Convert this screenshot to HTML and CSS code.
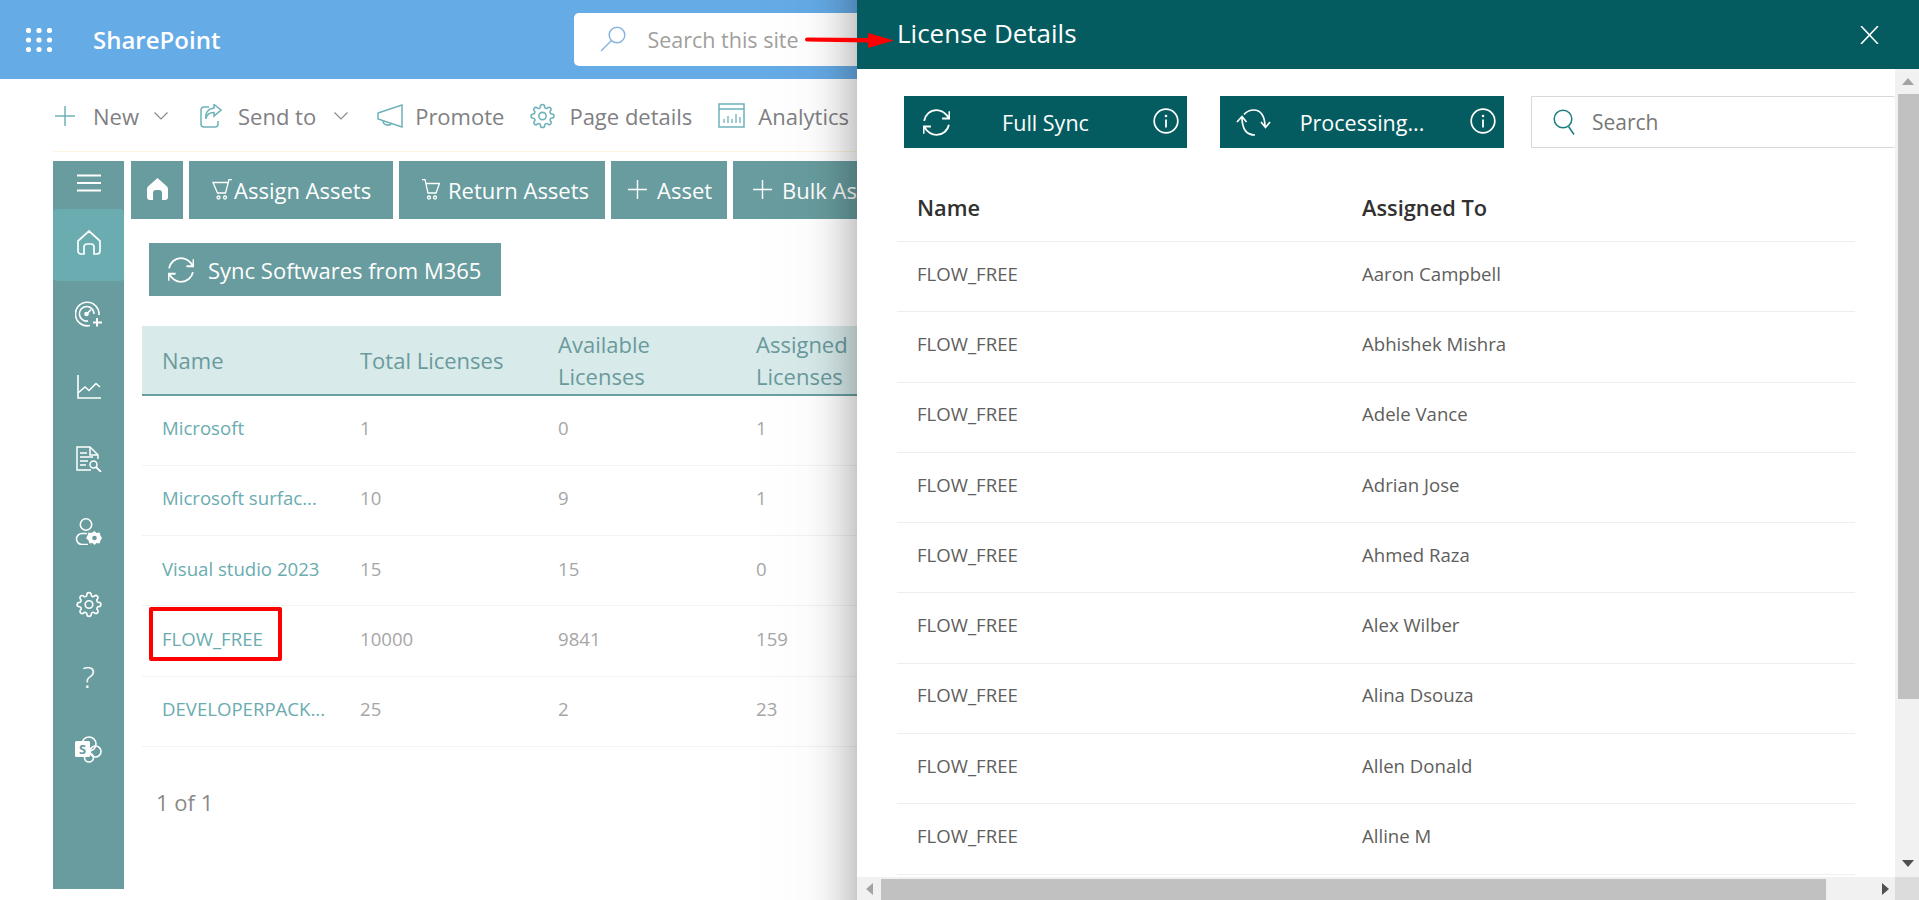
FILE: index.html
```html
<!DOCTYPE html>
<html lang="en">
<head>
    <meta charset="UTF-8">
    <meta name="viewport" content="width=device-width, initial-scale=1.0">
    <title>License Details</title>
    <link rel="stylesheet" href="styles.css">
</head>
<body>
<svg class="sprite" width="0" height="0">
    <symbol id="i-sync" viewBox="0 0 24 24">
        <path d="M1 10.500C2 5 6.500 1 12 1c4.500 0 8 2.500 11 7M23.500 2v6.500H17M23 14c-1 5-5.500 9-11 9-4.500 0-8-2.500-11-7M.5 22v-6.500H7" fill="none" stroke="#fff" stroke-width="1.700"/>
    </symbol>
    <symbol id="i-info" viewBox="0 0 26 26">
        <circle cx="13" cy="13" r="11.800" fill="none" stroke="#fff" stroke-width="1.700"/>
        <path d="M13 11.500v8" stroke="#fff" stroke-width="1.800"/>
        <circle cx="13" cy="8" r="1.300" fill="#fff"/>
    </symbol>
    <symbol id="i-plus" viewBox="0 0 20 20">
        <path d="M10 0v20M0 10h20" stroke="currentColor" stroke-width="1.500"/>
    </symbol>
    <symbol id="i-chev" viewBox="0 0 14 8">
        <path d="M.5 .5L7 7 13.500 .5" fill="none" stroke="#8a8a8a" stroke-width="1.200"/>
    </symbol>
    <symbol id="i-gear" viewBox="0 0 24 24">
        <g fill="none" stroke="currentColor" stroke-width="1.500">
            <circle cx="12" cy="12" r="3.500"/>
            <path d="M19.400 15a1.650 1.650 0 0 0 .33 1.820l.06.06a2 2 0 0 1 0 2.830 2 2 0 0 1-2.830 0l-.06-.06a1.650 1.650 0 0 0-1.820-.33 1.650 1.650 0 0 0-1 1.510V21a2 2 0 0 1-2 2 2 2 0 0 1-2-2v-.09A1.650 1.650 0 0 0 9 19.400a1.650 1.650 0 0 0-1.820.33l-.06.06a2 2 0 0 1-2.830 0 2 2 0 0 1 0-2.830l.06-.06a1.650 1.650 0 0 0 .33-1.820 1.650 1.650 0 0 0-1.510-1H3a2 2 0 0 1-2-2 2 2 0 0 1 2-2h.09A1.650 1.650 0 0 0 4.600 9a1.650 1.650 0 0 0-.33-1.820l-.06-.06a2 2 0 0 1 0-2.830 2 2 0 0 1 2.830 0l.06.06a1.650 1.650 0 0 0 1.820.33H9a1.650 1.650 0 0 0 1-1.510V3a2 2 0 0 1 2-2 2 2 0 0 1 2 2v.09a1.650 1.650 0 0 0 1 1.510 1.650 1.650 0 0 0 1.820-.33l.06-.06a2 2 0 0 1 2.830 0 2 2 0 0 1 0 2.830l-.06.06a1.650 1.650 0 0 0-.33 1.820V9a1.650 1.650 0 0 0 1.510 1H21a2 2 0 0 1 2 2 2 2 0 0 1-2 2h-.09a1.650 1.650 0 0 0-1.510 1z"/>
        </g>
    </symbol>
</svg>

<header class="topbar">
    <svg class="waffle" width="26" height="24" viewBox="0 0 26 24" fill="#fff">
        <circle cx="2.500" cy="2.500" r="2.600"/><circle cx="13" cy="2.500" r="2.600"/><circle cx="23.500" cy="2.500" r="2.600"/>
        <circle cx="2.500" cy="12" r="2.600"/><circle cx="13" cy="12" r="2.600"/><circle cx="23.500" cy="12" r="2.600"/>
        <circle cx="2.500" cy="21.500" r="2.600"/><circle cx="13" cy="21.500" r="2.600"/><circle cx="23.500" cy="21.500" r="2.600"/>
    </svg>
    <span class="brand">SharePoint</span>
    <div class="site-search">
        <svg width="26" height="26" viewBox="0 0 26 26" fill="none" stroke="#87b3e0" stroke-width="1.500">
            <circle cx="17" cy="9" r="7.800"/>
            <path d="M11.500 14.500L1 25"/>
        </svg>
        <span>Search this site</span>
    </div>
</header>

<nav class="cmdbar">
    <div class="cmd cmd-new"><svg class="cmd-ic" width="20" height="22"><use href="#i-plus"/></svg><span>New</span><svg class="chev" width="14" height="8"><use href="#i-chev"/></svg></div>
    <div class="cmd cmd-send"><svg class="cmd-ic" width="22" height="24" viewBox="0 0 22 24" fill="none" stroke="currentColor" stroke-width="1.500"><path d="M9 3H4a3 3 0 0 0-3 3v14a3 3 0 0 0 3 3h11a3 3 0 0 0 3-3v-3"/><path d="M6 15c.5-4 3-6.500 8-6.500V12l7-6-7-5.500V4C8 4.500 5 9 6 15z"/></svg><span>Send to</span><svg class="chev" width="14" height="8"><use href="#i-chev"/></svg></div>
    <div class="cmd cmd-promote"><svg class="cmd-ic" width="27" height="24" viewBox="0 0 27 24" fill="none" stroke="currentColor" stroke-width="1.500"><path d="M1 9L25 1v22L1 15z"/><path d="M6 16.500c0 5 7 6 9 2.500"/></svg><span>Promote</span></div>
    <div class="cmd cmd-details"><svg class="cmd-ic" width="25" height="26"><use href="#i-gear"/></svg><span>Page details</span></div>
    <div class="cmd cmd-analytics"><svg class="cmd-ic" width="27" height="25" viewBox="0 0 27 25" fill="none" stroke="currentColor" stroke-width="1.500"><path d="M1 1h25v23H1zM1 6h25"/><path d="M6 20v-4M10 20v-7M14 20v-4M18 20v-9M22 20v-6" stroke-width="1.300"/></svg><span>Analytics</span></div>
</nav>

<div class="app">
    <aside class="sidenav">
        <div class="nav-top">
            <svg width="24" height="18" viewBox="0 0 24 18" stroke="#fff" stroke-width="1.800"><path d="M0 1.500h24M0 9h24M0 16.500h24"/></svg>
        </div>
        <div class="nav-item active">
            <svg width="24" height="25" viewBox="0 0 24 25" fill="none" stroke="#fff" stroke-width="1.700"><path d="M1 11L12 1l11 10v10a3 3 0 0 1-3 3h-3v-7a3 3 0 0 0-3-3h-4a3 3 0 0 0-3 3v7H4a3 3 0 0 1-3-3z"/></svg>
        </div>
        <div class="nav-item">
            <svg width="28" height="26" viewBox="0 0 28 26" fill="none" stroke="#fff" stroke-width="1.600"><path d="M15 24.500A11.800 11.800 0 1 1 24 14"/><path d="M13 20a7.300 7.300 0 1 1 6-7"/><path d="M11 14l5-5.500"/><circle cx="11.500" cy="13" r="1.500" fill="#fff"/><path d="M22 17v8.500M18 21.500h9" stroke-width="2"/></svg>
        </div>
        <div class="nav-item">
            <svg width="24" height="24" viewBox="0 0 24 24" fill="none" stroke="#fff" stroke-width="1.600"><path d="M1 0v23h23"/><path d="M1 18l7-6 4 3.500 7-7 4 3.500"/></svg>
        </div>
        <div class="nav-item">
            <svg width="26" height="26" viewBox="0 0 26 26" fill="none" stroke="#fff" stroke-width="1.500"><path d="M15 24H1V1h13l8 8v4"/><path d="M14 1v8h8"/><path d="M4 7h7M4 11h13M4 15h8M4 19h6"/><circle cx="17.500" cy="18.500" r="3.500"/><path d="M20 21l5 5" stroke-width="1.800"/></svg>
        </div>
        <div class="nav-item">
            <svg width="27" height="27" viewBox="0 0 27 27" fill="none" stroke="#fff" stroke-width="1.600"><circle cx="11" cy="6.500" r="5.700"/><path d="M12 15.500H7a5.500 5.500 0 0 0 0 11h6"/><path d="M19.500 13l2 2 3-.5 1 3 1.500 2.500-1.500 2.500-1 3-3-.5-2 2-2-2-3 .5-1-3L11 20l1.500-2.500 1-3 3 .5z" fill="#fff" stroke="none"/><circle cx="19.500" cy="20" r="2.300" fill="#689c9e" stroke="none"/></svg>
        </div>
        <div class="nav-item">
            <svg class="nav-gear" width="26" height="27"><use href="#i-gear"/></svg>
        </div>
        <div class="nav-item nav-help">?</div>
        <div class="nav-item">
            <svg width="27" height="27" viewBox="0 0 27 27"><g fill="none" stroke="#fff" stroke-width="1.600"><circle cx="14" cy="8" r="7"/><circle cx="20.500" cy="15.500" r="5.500"/><circle cx="14" cy="21.500" r="4.500"/></g><rect x="0" y="5" width="15" height="16" rx="1.500" fill="#fff"/><text class="s-mark" x="7.500" y="18">S</text></svg>
        </div>
    </aside>

    <main class="content">
        <div class="toolbar">
            <button class="tool tool-home"><svg width="21" height="22" viewBox="0 0 21 22" fill="#fff"><path d="M10.500 0L20 8.500c.7.700 1 1.500 1 2.500v8a3 3 0 0 1-3 3h-3v-7a3 3 0 0 0-3-3H9a3 3 0 0 0-3 3v7H3a3 3 0 0 1-3-3v-8c0-1 .3-1.800 1-2.500z"/></svg></button>
            <button class="tool tool-assign"><svg width="20" height="21" viewBox="0 0 20 21" fill="none" stroke="#fff" stroke-width="1.300"><path d="M20 .7h-3L13.500 14h-8L1 3.500h15"/><circle cx="6.500" cy="18.500" r="1.500"/><circle cx="13" cy="18.500" r="1.500"/></svg>Assign Assets</button>
            <button class="tool tool-return"><svg width="18" height="21" viewBox="0 0 18 21" fill="none" stroke="#fff" stroke-width="1.300"><path d="M0 .7h3L6 14h8l3.500-9.500H4"/><circle cx="7" cy="18.500" r="1.500"/><circle cx="13" cy="18.500" r="1.500"/></svg>Return Assets</button>
            <button class="tool tool-add"><svg width="19" height="19"><use href="#i-plus"/></svg>Asset</button>
            <button class="tool tool-bulk"><svg width="19" height="19"><use href="#i-plus"/></svg>Bulk Assets</button>
        </div>

        <button class="sync-btn"><svg width="26" height="26"><use href="#i-sync"/></svg>Sync Softwares from M365</button>

        <table class="soft-table">
            <thead>
                <tr><th>Name</th><th>Total Licenses</th><th>Available Licenses</th><th>Assigned Licenses</th></tr>
            </thead>
            <tbody>
                <tr><td><a>Microsoft</a></td><td>1</td><td>0</td><td>1</td></tr>
                <tr><td><a>Microsoft surfac...</a></td><td>10</td><td>9</td><td>1</td></tr>
                <tr><td><a>Visual studio 2023</a></td><td>15</td><td>15</td><td>0</td></tr>
                <tr><td><a class="marked">FLOW_FREE</a></td><td>10000</td><td>9841</td><td>159</td></tr>
                <tr><td><a>DEVELOPERPACK...</a></td><td>25</td><td>2</td><td>23</td></tr>
            </tbody>
        </table>

        <div class="pager">1 of 1</div>
    </main>
</div>

<section class="panel">
    <div class="panel-head">
        <h2>License Details</h2>
        <svg width="19" height="18" viewBox="0 0 19 18" stroke="#fff" stroke-width="1.600"><path d="M1 0l17 18M18 0L1 18"/></svg>
    </div>
    <div class="panel-main">
        <div class="panel-body">
            <div class="panel-actions">
                <button class="p-btn p-btn-first"><svg class="lead" width="27" height="27"><use href="#i-sync"/></svg><span>Full Sync</span><svg class="info" width="26" height="26"><use href="#i-info"/></svg></button>
                <button class="p-btn p-btn-second"><svg class="lead" width="35" height="27" viewBox="0 0 35 27" fill="none" stroke="#fff" stroke-width="1.700"><path d="M8 5.500C11 2 14.500 1 18 1c6 0 11 5 11 17M25 13l4.500 5.500L34 13M19 26C11 26 6 21 6 8M1 13l5-5.500 4.500 5.500"/></svg><span>Processing...</span><svg class="info" width="26" height="26"><use href="#i-info"/></svg></button>
                <div class="p-search">
                    <svg width="23" height="26" viewBox="0 0 23 26" fill="none" stroke="#1b7c80" stroke-width="1.500"><circle cx="10" cy="10" r="8.800"/><path d="M15.500 17.500L21 25.500"/></svg>
                    <span>Search</span>
                </div>
            </div>
            <div class="lic-head"><span>Name</span><span>Assigned To</span></div>
            <div class="lic-row"><span>FLOW_FREE</span><span>Aaron Campbell</span></div>
            <div class="lic-row"><span>FLOW_FREE</span><span>Abhishek Mishra</span></div>
            <div class="lic-row"><span>FLOW_FREE</span><span>Adele Vance</span></div>
            <div class="lic-row"><span>FLOW_FREE</span><span>Adrian Jose</span></div>
            <div class="lic-row"><span>FLOW_FREE</span><span>Ahmed Raza</span></div>
            <div class="lic-row"><span>FLOW_FREE</span><span>Alex Wilber</span></div>
            <div class="lic-row"><span>FLOW_FREE</span><span>Alina Dsouza</span></div>
            <div class="lic-row"><span>FLOW_FREE</span><span>Allen Donald</span></div>
            <div class="lic-row"><span>FLOW_FREE</span><span>Alline M</span></div>
        </div>
        <div class="vscroll">
            <i class="arrow-up"></i>
            <div class="vthumb"></div>
            <i class="arrow-down"></i>
        </div>
    </div>
    <div class="hscroll">
        <i class="arrow-left"></i>
        <div class="hthumb"></div>
        <i class="arrow-right"></i>
        <div class="corner"></div>
    </div>
</section>

<!-- red callouts from the screenshot -->
<svg class="callout" width="92" height="16" viewBox="0 0 92 16"><path d="M3 4.500L64 5V0L90 7.500 64 15V9.500L3 8.500a2 2 0 0 1 0-4z" fill="#f00"/></svg>
</body>
</html>
```

FILE: styles.css
```css
*, *::before, *::after {
    box-sizing: border-box;
}

html, body {
    height: 100%;
}

body {
    margin: 0;
    overflow: hidden;
    background: #fff;
    font-family: "Open Sans", "Noto Sans", sans-serif;
    color: #605e5c;
}

.sprite {
    position: absolute;
}

button {
    border: none;
    font-family: inherit;
    color: #fff;
}

/* top bar */
.topbar {
    display: flex;
    align-items: center;
    height: 79px;
    background: #65abe6;
    padding-left: 26px;
}

.brand {
    margin-left: 41px;
    font-size: 24px;
    font-weight: 600;
    color: #fff;
}

.site-search {
    display: flex;
    align-items: center;
    width: 400px;
    height: 53px;
    margin-left: 354px;
    margin-top: -1px;
    padding-left: 26px;
    background: #fff;
    border-radius: 5px;
    font-size: 21.500px;
    color: #a19f9d;
}

.site-search span {
    margin-left: 21px;
}

/* command bar */
.cmdbar {
    display: flex;
    align-items: center;
    height: 73px;
    margin-left: 53px;
    padding: 1px 0 0 2px;
    gap: 28px;
    border-bottom: 1px solid #fdf5e0;
    font-size: 22px;
    color: #808084;
}

.cmd {
    display: flex;
    align-items: center;
    gap: 15px;
}

.cmd-ic {
    color: #6db2b8;
}

.cmd-new {
    margin-right: 4px;
}

.cmd-new .cmd-ic {
    margin-right: 3px;
}

.cmd-send {
    gap: 16px;
    margin-right: 1px;
}

.cmd-send .chev {
    margin-left: 2px;
}

.cmd-promote {
    gap: 11px;
    margin-right: -2px;
}

.cmd-details {
    gap: 14px;
    margin-right: -2px;
}

.cmd-analytics {
    gap: 13px;
}

/* main app */
.app {
    display: flex;
    margin: 9px 0 0 53px;
}

.sidenav {
    width: 71px;
    height: 728px;
    flex-shrink: 0;
    background: #689c9e;
}

.nav-top {
    display: flex;
    justify-content: center;
    align-items: center;
    height: 48px;
    padding-bottom: 5px;
}

.nav-item {
    display: flex;
    justify-content: center;
    align-items: center;
    height: 72.500px;
    padding-bottom: 6px;
    color: #fff;
}

.nav-item.active {
    background: #6aacb0;
    border-radius: 4px;
    height: 72px;
}

.nav-help {
    font-size: 30px;
    font-weight: 300;
}

.s-mark {
    font-size: 13px;
    font-weight: 700;
    fill: #689c9e;
    text-anchor: middle;
}

.content {
    flex: 1;
    padding-left: 7px;
}

.toolbar {
    display: flex;
    gap: 6px;
}

.tool {
    display: flex;
    align-items: center;
    height: 58px;
    padding-bottom: 2px;
    background: #689c9e;
    font-size: 22px;
    white-space: nowrap;
    flex-shrink: 0;
}

.tool-home {
    width: 52px;
    justify-content: center;
    padding: 0 0 2px;
}

.tool-assign {
    width: 204px;
    padding-left: 23px;
    gap: 2px;
}

.tool-return {
    width: 206px;
    padding-left: 23px;
    gap: 8px;
}

.tool-add {
    width: 116px;
    padding-left: 17px;
    gap: 10px;
}

.tool-bulk {
    width: 200px;
    padding-left: 20px;
    gap: 10px;
}

.sync-btn {
    display: flex;
    align-items: center;
    gap: 14px;
    width: 352px;
    height: 53px;
    margin: 24px 0 0 18px;
    padding-left: 19px;
    background: #689c9e;
    font-size: 22px;
}

.soft-table {
    width: 792px;
    margin: 30px 0 0 11px;
    border-collapse: collapse;
    table-layout: fixed;
}

.soft-table th {
    height: 69px;
    padding: 0 20px;
    background: #d8eaea;
    border-bottom: 2px solid #6a9e9f;
    text-align: left;
    font-size: 22px;
    font-weight: 400;
    line-height: 32px;
    color: #6a9a9c;
}

.soft-table td {
    height: 70.300px;
    padding: 0 20px 5px;
    border-bottom: 1px solid #f3f3f3;
    font-size: 18.600px;
    color: #a6a6a6;
    white-space: nowrap;
}

.soft-table a {
    color: #6aacb0;
}

.marked {
    position: relative;
}

/* annotation box round the FLOW_FREE link */
.marked::after {
    content: "";
    position: absolute;
    left: -13px;
    top: -19px;
    width: 133px;
    height: 54px;
    border: 4px solid #f00;
    border-radius: 2px;
}

.pager {
    margin: 40px 0 0 25px;
    font-size: 22px;
    color: #8a8a8a;
}

/* details panel */
.panel {
    position: fixed;
    top: 0;
    left: 857px;
    right: 0;
    height: 900px;
    display: flex;
    flex-direction: column;
    background: #fff;
    z-index: 5;
}

.panel::before {
    content: "";
    position: absolute;
    top: -200px;
    bottom: -200px;
    left: 0;
    right: 0;
    box-shadow: 0 0 46px rgba(0, 0, 0, 0.36), 0 0 110px rgba(0, 0, 0, 0.08);
    z-index: -1;
}

.panel-head {
    display: flex;
    justify-content: space-between;
    align-items: center;
    height: 69px;
    flex-shrink: 0;
    padding: 0 40px 0 40px;
    background: #045c60;
}

.panel-head h2 {
    margin: 0 0 3px;
    font-size: 26px;
    font-weight: 400;
    color: #fff;
}

.panel-main {
    display: flex;
    flex: 1;
    min-height: 0;
}

.panel-body {
    flex: 1;
    overflow: hidden;
    padding: 27px 40px 0 40px;
    background: #fff;
}

.panel-actions {
    display: flex;
    margin-left: 7px;
    margin-right: -40px;
}

.p-btn {
    display: grid;
    grid-template-columns: 1fr auto 1fr;
    align-items: center;
    width: 283px;
    height: 52px;
    padding: 0 8px;
    background: #045c60;
    font-size: 21.500px;
}

.p-btn span {
    margin-top: 1px;
}

.p-btn-first .lead {
    margin-left: 11px;
}

.p-btn-second {
    width: 284px;
    margin-left: 33px;
}

.p-btn-second .lead {
    margin-left: 8px;
}

.lead {
    justify-self: start;
}

.info {
    justify-self: end;
    margin-top: -2px;
}

.p-search {
    display: flex;
    align-items: center;
    flex: 1;
    height: 52px;
    margin-left: 27px;
    padding-left: 21px;
    gap: 16px;
    border: 1px solid #d8d8d8;
    border-right: none;
    border-radius: 2px;
    font-size: 21px;
    color: #777;
}

.lic-head,
.lic-row {
    display: grid;
    grid-template-columns: 445px 1fr;
    align-items: center;
    padding-left: 20px;
    border-bottom: 1px solid #eee;
}

.lic-head {
    height: 94px;
    padding-top: 25px;
    font-size: 21.800px;
    font-weight: 600;
    color: #323130;
}

.lic-row {
    height: 70.300px;
    padding-bottom: 7px;
    font-size: 18.600px;
    color: #605e5c;
}

/* scrollbars are static in the picture */
.vscroll {
    display: flex;
    flex-direction: column;
    align-items: stretch;
    width: 24px;
    flex-shrink: 0;
    background: #f1f1f1;
    position: relative;
}

.vthumb {
    height: 605px;
    margin: 25px 0 0 3px;
    background: #c1c1c1;
}

.arrow-up,
.arrow-down,
.arrow-left,
.arrow-right {
    position: absolute;
    width: 0;
    height: 0;
    border-style: solid;
    border-color: transparent;
}

.arrow-up {
    top: 9px;
    left: 7px;
    border-width: 0 6px 7px;
    border-bottom-color: #a3a3a3;
}

.arrow-down {
    bottom: 10px;
    left: 7px;
    border-width: 7px 6px 0;
    border-top-color: #505050;
}

.hscroll {
    display: flex;
    position: relative;
    height: 23px;
    flex-shrink: 0;
    background: #f1f1f1;
}

.hthumb {
    width: 945px;
    height: 21px;
    margin: 2px 0 0 24px;
    background: #c1c1c1;
}

.arrow-left {
    top: 6px;
    left: 9px;
    border-width: 6px 7px 6px 0;
    border-right-color: #a3a3a3;
}

.arrow-right {
    top: 6px;
    right: 30px;
    border-width: 6px 0 6px 7px;
    border-left-color: #505050;
}

.corner {
    position: absolute;
    top: 0;
    right: 0;
    width: 24px;
    height: 23px;
    background: #dcdcdc;
}

.callout {
    position: fixed;
    top: 33px;
    left: 804px;
    z-index: 6;
}
```
